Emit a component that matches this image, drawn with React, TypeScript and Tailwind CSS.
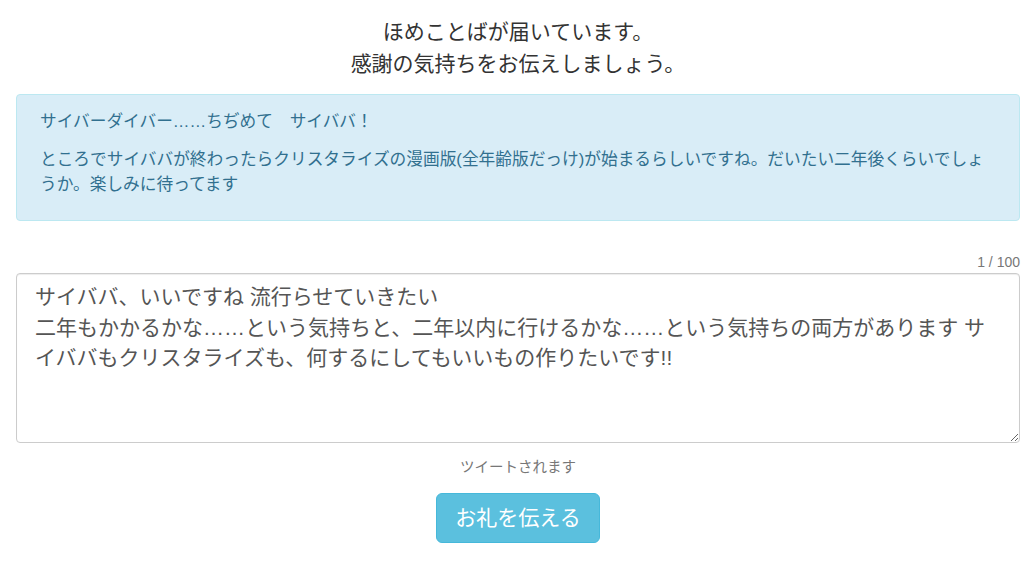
export default function App() {
  const jp = "font-['Liberation_Sans','Noto_Sans_CJK_JP',sans-serif]";
  return (
    <div className={`bg-white pl-4 pr-2 pt-[16px] ${jp}`}>
      <div className="text-center text-[21px] leading-[32px] text-[#333]">
        <p>ほめことばが届いています。</p>
        <p>感謝の気持ちをお伝えしましょう。</p>
      </div>

      <div className="mt-[14px] h-[127px] rounded border border-[#bce8f1] bg-[#d9edf7] px-[23px] pt-[14px] text-[16.7px] leading-[25px] text-[#31708f]">
        <p>サイバーダイバー……ちぢめて　サイババ！</p>
        <p className="mt-[13px]">
          ところでサイババが終わったらクリスタライズの漫画版(全年齢版だっけ)が始まるらしいですね。だいたい二年後くらいでしょうか。楽しみに待ってます
        </p>
      </div>

      <div className="mt-[31px] text-right text-[14px] leading-[20px] text-[#777]">1 / 100</div>
      <textarea
        className="mt-[1px] block h-[170px] w-full resize-y rounded border border-[#ccc] px-[18px] py-[8px] text-[21px] leading-[30.5px] text-[#555] shadow-[inset_0_1px_1px_rgba(0,0,0,0.075)] outline-none"
        defaultValue={
          "サイババ、いいですね 流行らせていきたい\n二年もかかるかな……という気持ちと、二年以内に行けるかな……という気持ちの両方があります サイババもクリスタライズも、何するにしてもいいもの作りたいです!!"
        }
      />

      <p className="mt-[14px] text-center text-[14.5px] leading-[20px] text-[#777]">ツイートされます</p>
      <div className="mt-[16px] flex justify-center">
        <button className="h-[50px] w-[164px] rounded-md border border-[#46b8da] bg-[#5bc0de] text-[21px] text-white">
          お礼を伝える
        </button>
      </div>
    </div>
  );
}
